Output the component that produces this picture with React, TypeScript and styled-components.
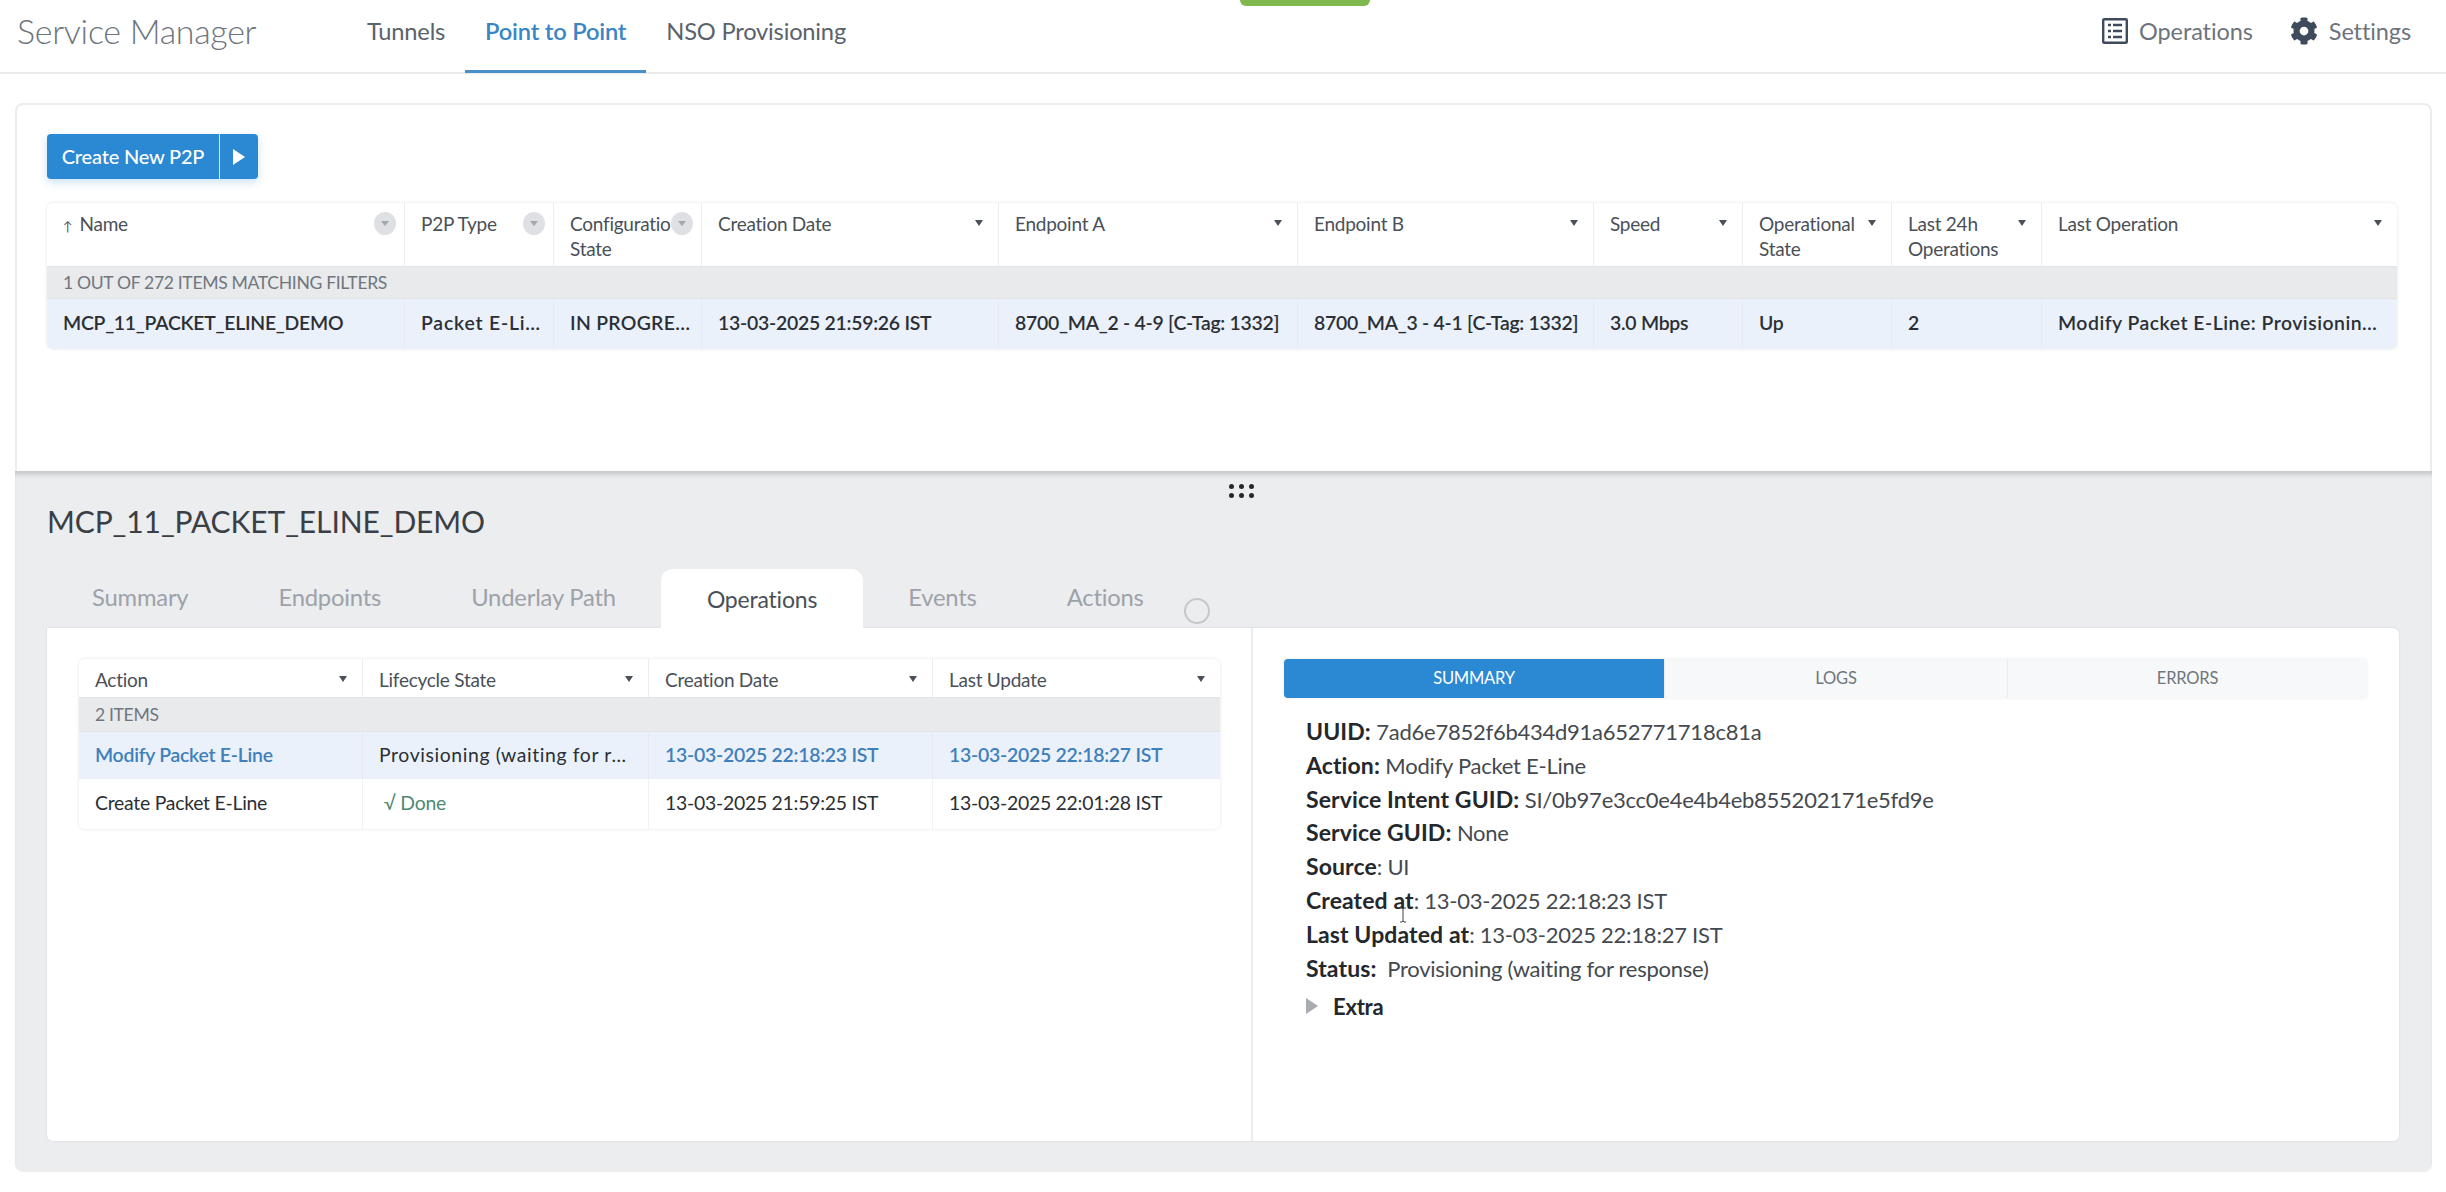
import React from 'react';
import styled, { createGlobalStyle } from 'styled-components';
import { FaCog } from 'react-icons/fa';

const GlobalStyle = createGlobalStyle`
  html, body {
    margin: 0;
    padding: 0;
    background: #fff;
    font-family: 'Lato', 'Noto Sans', sans-serif;
    color: #2e3238;
  }
  * { box-sizing: border-box; }
`;

const p2pColumns = '358px 149px 148px 297px 299px 296px 149px 149px 150px 1fr';
const opsColumns = '284px 286px 284px 1fr';

const headerCols = [
  { label: 'Name', sorted: true, filter: true },
  { label: 'P2P Type', filter: true },
  { label: 'Configuratio\nState', filter: true, fixedBreak: true },
  { label: 'Creation Date' },
  { label: 'Endpoint A' },
  { label: 'Endpoint B' },
  { label: 'Speed' },
  { label: 'Operational State' },
  { label: 'Last 24h Operations' },
  { label: 'Last Operation' },
];

const p2pRow = [
  { value: 'MCP_11_PACKET_ELINE_DEMO' },
  { value: 'Packet E-Line', tracking: 0.8, pad: 7 },
  { value: 'IN PROGRESS', tracking: 0.3, pad: 7 },
  { value: '13-03-2025 21:59:26 IST' },
  { value: '8700_MA_2 - 4-9 [C-Tag: 1332]' },
  { value: '8700_MA_3 - 4-1 [C-Tag: 1332]' },
  { value: '3.0 Mbps' },
  { value: 'Up' },
  { value: '2' },
  { value: 'Modify Packet E-Line: Provisioning (waiting for response)', tracking: 0.5 },
];

const summaryRows = [
  ['UUID:', ' 7ad6e7852f6b434d91a652771718c81a'],
  ['Action:', ' Modify Packet E-Line'],
  ['Service Intent GUID:', ' SI/0b97e3cc0e4e4b4eb855202171e5fd9e'],
  ['Service GUID:', ' None'],
  ['Source', ': UI'],
  ['Created at', ': 13-03-2025 22:18:23 IST'],
  ['Last Updated at', ': 13-03-2025 22:18:27 IST'],
  ['Status:', '  Provisioning (waiting for response)'],
];

const Page = styled.div`
  width: 2446px;
  height: 1192px;
  display: flex;
  flex-direction: column;
  overflow: hidden;
  position: relative;
`;

const StatusPill = styled.div`
  position: absolute;
  top: 0;
  left: 1240px;
  width: 130px;
  height: 6px;
  background: #7fb84f;
  border-radius: 0 0 12px 12px;
`;

const Header = styled.header`
  height: 74px;
  flex: none;
  display: flex;
  align-items: stretch;
  padding: 0 35px 0 17px;
  border-bottom: 2px solid #e9eaec;
`;

const Brand = styled.div`
  width: 330px;
  font-size: 34px;
  font-weight: 300;
  color: #6d747c;
  line-height: 62px;
  letter-spacing: -0.3px;
`;

const Nav = styled.nav`
  display: flex;
  flex: 1;
`;

const NavItem = styled.a<{ $active?: boolean }>`
  padding: 0 20px;
  height: 73px;
  line-height: 62px;
  font-size: 23.7px;
  letter-spacing: -0.2px;
  color: ${p => (p.$active ? '#3a85c6' : '#5a626b')};
  font-weight: ${p => (p.$active ? 600 : 400)};
  border-bottom: ${p => (p.$active ? '3px solid #4a90c8' : '3px solid transparent')};
`;

const HeaderTools = styled.div`
  display: flex;
  align-items: center;
  height: 62px;
  gap: 37px;
`;

const Tool = styled.a`
  display: flex;
  align-items: center;
  gap: 11px;
  font-size: 23.5px;
  letter-spacing: -0.1px;
  color: #6d747c;
`;

const Main = styled.main`
  flex: 1;
  display: flex;
  flex-direction: column;
  padding: 29px 14px 20px 15px;
`;

const TopPanel = styled.section`
  height: 368px;
  flex: none;
  padding: 29px 33px 0 30px;
  border: 2px solid #eceded;
  border-bottom: none;
  border-radius: 8px 8px 0 0;
  background: #fff;
`;

const SplitButton = styled.div`
  display: inline-flex;
  height: 45px;
  border-radius: 4px;
  background: #2b88d2;
  color: #fff;
  box-shadow: 0 3px 8px rgba(43, 136, 210, 0.25);
  margin-bottom: 24px;
`;

const ButtonLabel = styled.span`
  width: 173px;
  text-align: center;
  line-height: 45px;
  font-size: 20px;
  letter-spacing: -0.2px;
  font-weight: 500;
  border-right: 1px solid rgba(255, 255, 255, 0.8);
`;

const ButtonArrow = styled.span`
  width: 38px;
  display: flex;
  align-items: center;
  justify-content: center;
`;

const TableBox = styled.div`
  border-radius: 6px;
  box-shadow: 0 0 3px rgba(40, 50, 70, 0.14);
  overflow: hidden;
  background: #fff;
`;

const HeadRow = styled.div<{ $columns: string; $height: number }>`
  display: grid;
  grid-template-columns: ${p => p.$columns};
  height: ${p => p.$height}px;
  border-bottom: 1px solid #e3e4e7;
`;

const HeadCell = styled.div`
  position: relative;
  padding: 8px 34px 0 16px;
  border-right: 1px solid #eceded;
  font-size: 19px;
  line-height: 25px;
  letter-spacing: -0.25px;
  color: #4a5058;
  &:last-child { border-right: none; }
`;

const HeadLabel = styled.span<{ $fixedBreak?: boolean }>`
  display: block;
  ${p => p.$fixedBreak && 'margin-right: -14px; white-space: pre;'}
`;

const SortArrow = styled.span`
  font-size: 13px;
  margin-right: 7px;
  color: #555;
`;

const Caret = styled.span`
  position: absolute;
  top: 17px;
  right: 15px;
  width: 0;
  height: 0;
  border-left: 4px solid transparent;
  border-right: 4px solid transparent;
  border-top: 6px solid #4a5058;
`;

const FilterBadge = styled.span`
  position: absolute;
  top: 9px;
  right: 8px;
  width: 22px;
  height: 23px;
  border-radius: 50%;
  background: #dfe0e4;
  &::after {
    content: '';
    position: absolute;
    left: 7px;
    top: 9px;
    border-left: 4px solid transparent;
    border-right: 4px solid transparent;
    border-top: 5px solid #a3a7ae;
  }
`;

const GroupRow = styled.div<{ $height: number }>`
  height: ${p => p.$height}px;
  line-height: ${p => p.$height}px;
  padding-left: 16px;
  background: #e9eaec;
  color: #70767e;
  font-size: 17.6px;
  letter-spacing: -0.35px;
  border-bottom: 1px solid #e3e4e7;
`;

const DataRow = styled.div<{ $columns: string; $height: number; $selected?: boolean; $strong?: boolean }>`
  display: grid;
  grid-template-columns: ${p => p.$columns};
  height: ${p => p.$height}px;
  line-height: ${p => p.$height - 2}px;
  background: ${p => (p.$selected ? '#eaf1fa' : '#fff')};
  font-size: 19.4px;
  font-weight: ${p => (p.$strong ? 600 : 400)};
  letter-spacing: -0.25px;
  color: #2b2f35;
`;

const DataCell = styled.div<{ $link?: boolean; $done?: boolean; $tracking?: number; $pad?: number }>`
  padding: 0 ${p => p.$pad ?? 14}px 0 16px;
  white-space: nowrap;
  overflow: hidden;
  text-overflow: ellipsis;
  letter-spacing: ${p => (p.$tracking !== undefined ? `${p.$tracking}px` : 'inherit')};
  border-right: 1px solid rgba(225, 228, 232, 0.5);
  color: ${p => (p.$link ? '#3f7fbb' : p.$done ? '#4f8a70' : 'inherit')};
  font-weight: ${p => (p.$link ? 600 : 'inherit')};
  &:last-child { border-right: none; }
`;

const BottomPanel = styled.section`
  flex: 1;
  position: relative;
  background: #ecedef;
  border-top: 1px solid #c9cbce;
  box-shadow: inset 0 5px 5px -3px rgba(60, 65, 75, 0.25);
  border-radius: 0 0 8px 8px;
  padding: 31px 33px 31px 32px;
  display: flex;
  flex-direction: column;
`;

const Grip = styled.div`
  position: absolute;
  top: 12px;
  left: 1214px;
  display: grid;
  grid-template-columns: repeat(3, 5px);
  gap: 4px 5px;
  span {
    width: 5px;
    height: 5px;
    border-radius: 50%;
    background: #24272c;
  }
`;

const Title = styled.h2`
  margin: 0 0 30px;
  font-size: 30px;
  line-height: 36px;
  font-weight: 400;
  letter-spacing: -0.1px;
  color: #3a3f46;
`;

const TabStrip = styled.div`
  display: flex;
  align-items: flex-end;
  height: 59px;
  position: relative;
`;

const DetailTab = styled.a<{ $active?: boolean }>`
  padding: 0 ${p => (p.$active ? 46 : 45)}px;
  height: 59px;
  line-height: ${p => (p.$active ? 60 : 56)}px;
  font-size: ${p => (p.$active ? 23 : 23.8)}px;
  letter-spacing: -0.2px;
  color: ${p => (p.$active ? '#4a5058' : '#9da2a9')};
  background: ${p => (p.$active ? '#fff' : 'transparent')};
  border-radius: ${p => (p.$active ? '12px 12px 0 0' : '0')};
`;

const Spinner = styled.span`
  position: absolute;
  left: 1137px;
  top: 29px;
  width: 26px;
  height: 26px;
  border: 2px solid #c4c7cb;
  border-radius: 50%;
`;

const DetailCard = styled.div`
  flex: 1;
  display: grid;
  grid-template-columns: 1206px 1fr;
  background: #fff;
  border-radius: 0 6px 6px 6px;
  box-shadow: 0 0 2px rgba(40, 50, 70, 0.15);
`;

const LeftPane = styled.div`
  padding: 31px 31px 31px 32px;
  border-right: 2px solid #eceded;
`;

const RightPane = styled.div`
  padding: 31px 32px 0 31px;
`;

const Segments = styled.div`
  display: grid;
  grid-template-columns: 381px 343px 1fr;
  height: 39px;
  margin-bottom: 17px;
  border-radius: 4px;
  background: #f7f8f9;
  box-shadow: 0 0 3px rgba(40, 50, 70, 0.1);
  overflow: hidden;
`;

const Segment = styled.div<{ $active?: boolean }>`
  text-align: center;
  line-height: 39px;
  font-size: 16.5px;
  letter-spacing: -0.2px;
  color: ${p => (p.$active ? '#fff' : '#70767e')};
  background: ${p => (p.$active ? '#2b88d2' : 'transparent')};
  border-right: 1px solid #eceded;
  &:last-child { border-right: none; }
`;

const Facts = styled.div`
  padding-left: 22px;
  position: relative;
`;

const Fact = styled.div`
  height: 33.8px;
  line-height: 33.8px;
  font-size: 22px;
  letter-spacing: -0.25px;
  color: #44494f;
  white-space: pre;
  b {
    font-size: 23px;
    font-weight: 700;
    letter-spacing: 0.1px;
    color: #24272c;
  }
`;

const ExtraRow = styled.div`
  display: flex;
  align-items: center;
  height: 34px;
  margin-top: 4px;
  gap: 15px;
  font-size: 22px;
  font-weight: 700;
  letter-spacing: -0.25px;
  color: #24272c;
  &::before {
    content: '';
    border-left: 12px solid #a8abb0;
    border-top: 8px solid transparent;
    border-bottom: 8px solid transparent;
  }
`;

const TextCursor = styled.svg`
  position: absolute;
  left: 115px;
  top: 192px;
`;

const OperationsIcon = () => (
  <svg width="26" height="26" viewBox="0 0 26 26" fill="none">
    <rect x="1.2" y="1.2" width="23.6" height="23.6" rx="1" stroke="#3f4a5c" strokeWidth="2.4" />
    <path d="M6 7h3M11 7h9M6 13h3M11 13h9M6 19h3M11 19h9" stroke="#3f4a5c" strokeWidth="2.6" />
  </svg>
);

const App = () => {
  return (
    <Page>
      <GlobalStyle />
      <StatusPill />
      <Header>
        <Brand>Service Manager</Brand>
        <Nav>
          <NavItem>Tunnels</NavItem>
          <NavItem $active>Point to Point</NavItem>
          <NavItem>NSO Provisioning</NavItem>
        </Nav>
        <HeaderTools>
          <Tool><OperationsIcon />Operations</Tool>
          <Tool><FaCog size={28} color="#3f4a5c" />Settings</Tool>
        </HeaderTools>
      </Header>

      <Main>
        <TopPanel>
          <SplitButton>
            <ButtonLabel>Create New P2P</ButtonLabel>
            <ButtonArrow>
              <svg width="14" height="18" viewBox="0 0 14 18"><path d="M1 1l12 8-12 8z" fill="#fff" /></svg>
            </ButtonArrow>
          </SplitButton>
          <TableBox>
            <HeadRow $columns={p2pColumns} $height={64}>
              {headerCols.map(col => (
                <HeadCell key={col.label}>
                  <HeadLabel $fixedBreak={col.fixedBreak}>
                    {col.sorted && <SortArrow>↑</SortArrow>}
                    {col.label}
                  </HeadLabel>
                  {col.filter ? <FilterBadge /> : <Caret />}
                </HeadCell>
              ))}
            </HeadRow>
            <GroupRow $height={32}>1 OUT OF 272 ITEMS MATCHING FILTERS</GroupRow>
            <DataRow $columns={p2pColumns} $height={50} $selected $strong>
              {p2pRow.map(cell => (
                <DataCell key={cell.value} $tracking={cell.tracking} $pad={cell.pad}>{cell.value}</DataCell>
              ))}
            </DataRow>
          </TableBox>
        </TopPanel>

        <BottomPanel>
          <Grip>{Array.from({ length: 6 }, (_, i) => <span key={i} />)}</Grip>
          <Title>MCP_11_PACKET_ELINE_DEMO</Title>
          <TabStrip>
            <DetailTab>Summary</DetailTab>
            <DetailTab>Endpoints</DetailTab>
            <DetailTab>Underlay Path</DetailTab>
            <DetailTab $active>Operations</DetailTab>
            <DetailTab>Events</DetailTab>
            <DetailTab>Actions</DetailTab>
            <Spinner />
          </TabStrip>
          <DetailCard>
            <LeftPane>
              <TableBox>
                <HeadRow $columns={opsColumns} $height={39}>
                  {['Action', 'Lifecycle State', 'Creation Date', 'Last Update'].map(label => (
                    <HeadCell key={label}>{label}<Caret /></HeadCell>
                  ))}
                </HeadRow>
                <GroupRow $height={34}>2 ITEMS</GroupRow>
                <DataRow $columns={opsColumns} $height={47} $selected>
                  <DataCell $link>Modify Packet E-Line</DataCell>
                  <DataCell $tracking={0.6}>Provisioning (waiting for response)</DataCell>
                  <DataCell $link>13-03-2025 22:18:23 IST</DataCell>
                  <DataCell $link>13-03-2025 22:18:27 IST</DataCell>
                </DataRow>
                <DataRow $columns={opsColumns} $height={50}>
                  <DataCell>Create Packet E-Line</DataCell>
                  <DataCell $done>&nbsp;√ Done</DataCell>
                  <DataCell>13-03-2025 21:59:25 IST</DataCell>
                  <DataCell>13-03-2025 22:01:28 IST</DataCell>
                </DataRow>
              </TableBox>
            </LeftPane>
            <RightPane>
              <Segments>
                <Segment $active>SUMMARY</Segment>
                <Segment>LOGS</Segment>
                <Segment>ERRORS</Segment>
              </Segments>
              <Facts>
                {summaryRows.map(([label, value]) => (
                  <Fact key={label}><b>{label}</b>{value}</Fact>
                ))}
                <ExtraRow>Extra</ExtraRow>
                <TextCursor width="8" height="16" viewBox="0 0 8 16">
                  <path d="M1 1h2l1 1 1-1h2M4 2v12M1 15h2l1-1 1 1h2" stroke="#444" strokeWidth="1" fill="none" />
                </TextCursor>
              </Facts>
            </RightPane>
          </DetailCard>
        </BottomPanel>
      </Main>
    </Page>
  );
};

export default App;
